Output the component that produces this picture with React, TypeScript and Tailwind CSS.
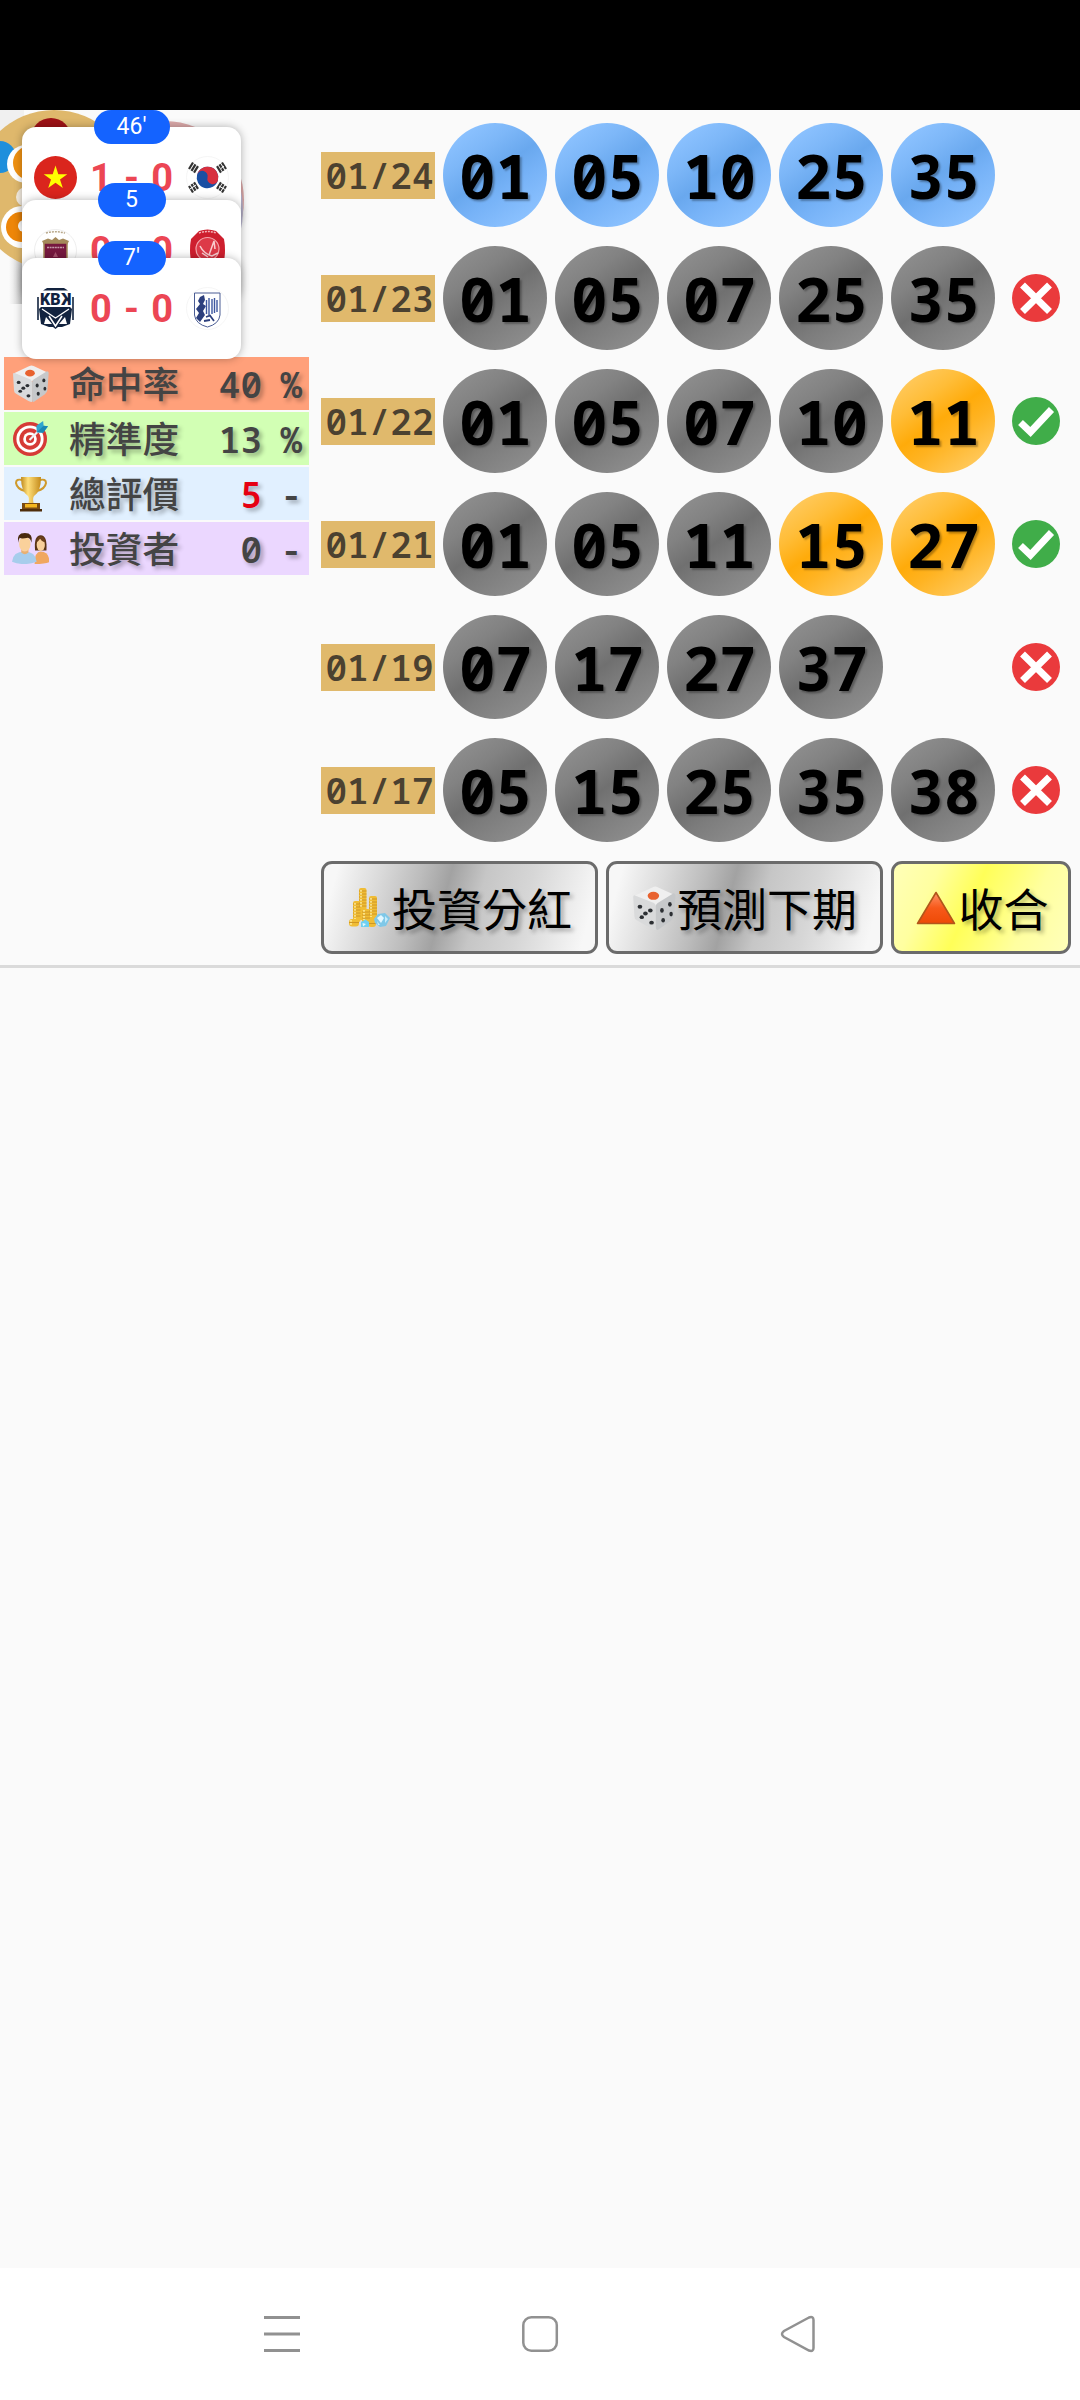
import type { ReactNode } from 'react';
import clsx from 'clsx';

type Tone = 'blue' | 'gray' | 'gold';

type Draw = {
  date: string;
  balls: [string, Tone][];
  hit?: boolean;
};

const draws: Draw[] = [
  { date: '01/24', balls: [['01', 'blue'], ['05', 'blue'], ['10', 'blue'], ['25', 'blue'], ['35', 'blue']] },
  { date: '01/23', balls: [['01', 'gray'], ['05', 'gray'], ['07', 'gray'], ['25', 'gray'], ['35', 'gray']], hit: false },
  { date: '01/22', balls: [['01', 'gray'], ['05', 'gray'], ['07', 'gray'], ['10', 'gray'], ['11', 'gold']], hit: true },
  { date: '01/21', balls: [['01', 'gray'], ['05', 'gray'], ['11', 'gray'], ['15', 'gold'], ['27', 'gold']], hit: true },
  { date: '01/19', balls: [['07', 'gray'], ['17', 'gray'], ['27', 'gray'], ['37', 'gray']], hit: false },
  { date: '01/17', balls: [['05', 'gray'], ['15', 'gray'], ['25', 'gray'], ['35', 'gray'], ['38', 'gray']], hit: false },
];

const toneClass: Record<Tone, string> = {
  blue: 'bg-[linear-gradient(145deg,#8cc2ff_12%,#7db7f8_30%,#69a8ee_48%,#76b2f7_62%,#8cc2ff_88%)]',
  gray: 'bg-[linear-gradient(145deg,#8d8d8d_12%,#828282_30%,#707070_48%,#7c7c7c_62%,#8d8d8d_88%)]',
  gold: 'bg-[linear-gradient(145deg,#ffc95c_12%,#ffbd38_30%,#ffab0a_48%,#ffb321_62%,#ffc95c_88%)]',
};

/* ---------- icons ---------- */

function DiceIcon({ className }: { className?: string }) {
  return (
    <svg viewBox="0 0 36 36" className={className}>
      <path d="M2 8 L17 1 Q19 0 21 1 L34 7 L19 16 Z" fill="#efefef" />
      <path d="M1 9 Q1 7 3 8 L18 14 Q19.5 15 19.5 17 L19.5 36 Q18 36 16 35 L4 28 Q2 27 2 25 Z" fill="#d9dadb" />
      <path d="M34 6 Q36 6 35.600 9 L34.500 24 Q34 27 32 28.500 L21 36 Q19.500 36 19.500 34 L19.500 17 Q19.500 15 21 14 Z" fill="#c6c8ca" />
      <ellipse cx="17.500" cy="8" rx="4.700" ry="3.300" fill="#e8622f" />
      <g fill="#2c2f33">
        <ellipse cx="6.500" cy="17" rx="1.900" ry="1.600" />
        <ellipse cx="15" cy="20" rx="1.900" ry="1.600" />
        <ellipse cx="11" cy="22.500" rx="1.900" ry="1.600" />
        <ellipse cx="8" cy="25.500" rx="1.800" ry="1.500" />
        <ellipse cx="16" cy="30" rx="1.900" ry="1.600" />
        <ellipse cx="31" cy="15" rx="1.500" ry="1.900" />
        <ellipse cx="24.500" cy="20" rx="1.500" ry="1.900" />
        <ellipse cx="32" cy="23" rx="1.400" ry="1.900" />
        <ellipse cx="25.500" cy="28" rx="1.500" ry="1.900" />
      </g>
    </svg>
  );
}

function TargetIcon({ className }: { className?: string }) {
  return (
    <svg viewBox="0 0 36 36" className={className}>
      <circle cx="17.500" cy="18.500" r="17.500" fill="#d63a36" />
      <circle cx="17.500" cy="18.500" r="14" fill="#fff" />
      <circle cx="17.500" cy="18.500" r="11" fill="#d63a36" />
      <circle cx="17.500" cy="18.500" r="7" fill="#fff" />
      <circle cx="17.500" cy="18.500" r="4.200" fill="#d63a36" />
      <path d="M17 19.500 L27 9.500" stroke="#eef3f5" strokeWidth="2.200" />
      <path d="M24 5 L31 0 L31.500 5 L36 5.500 L31 12 L24.500 11.500 Z" fill="#2fa5cf" />
      <path d="M24.500 11.500 L31.500 5 L36 5.500 L31 12 Z" fill="#1b87b4" />
    </svg>
  );
}

function TrophyIcon({ className }: { className?: string }) {
  return (
    <svg viewBox="0 0 36 36" className={className}>
      <defs>
        <linearGradient id="cup" x1="0" x2="1" y1="0" y2="0">
          <stop offset="0" stopColor="#c08a1c" />
          <stop offset=".35" stopColor="#ffdf7a" />
          <stop offset="1" stopColor="#c48a1a" />
        </linearGradient>
      </defs>
      <path d="M9 4 Q3 2.500 3 7 Q4 13 12 15" fill="none" stroke="#cf9a2c" strokeWidth="2" />
      <path d="M27 4 Q33 2.500 33 7 Q32 13 24 15" fill="none" stroke="#cf9a2c" strokeWidth="2" />
      <path d="M8 1 H28 Q28 16 21 20 Q19.500 22 20.500 27 H15.500 Q16.500 22 15 20 Q8 16 8 1 Z" fill="url(#cup)" />
      <path d="M9 27 H27 V33 H9 Z" fill="#7a4a12" />
      <path d="M12 28 H24 V31.500 H12 Z" fill="#f3b51f" />
      <path d="M7 33 H29 V35.500 H7 Z" fill="#4f2d0b" />
    </svg>
  );
}

function PeopleIcon({ className }: { className?: string }) {
  return (
    <svg viewBox="0 0 36 30" className={className}>
      <path d="M22.500 17 Q21 2 28 2 Q34.500 2 33.500 17 Z" fill="#5a3415" />
      <path d="M22 30 Q22 18 28 18 Q36 18 36.500 28 Q33 30 22 30 Z" fill="#f0a760" />
      <ellipse cx="28" cy="11.500" rx="4" ry="6" fill="#f8cf9a" />
      <path d="M23.500 9 Q25 3 28.500 3 Q32 4 32.500 9 Q28 8 27.500 5 Q26 8 23.500 9 Z" fill="#6b3f1b" />
      <path d="M0 28 Q1 18 12 18 Q23 18 24 28 Q18 30.500 12 30 Q5 30.500 0 28 Z" fill="#a7cdec" />
      <path d="M9 15 H16 V19 Q12.500 22 9 19 Z" fill="#e9b072" />
      <ellipse cx="12.500" cy="10.500" rx="5.600" ry="7.500" fill="#fad19b" />
      <path d="M6 9.500 Q4 0 12.500 0 Q21 0 19 9.500 Q18 5 15.500 4.500 Q9 6 7.500 4.500 Q6.500 6 6 9.500 Z" fill="#49290f" />
    </svg>
  );
}

function CoinsIcon({ className }: { className?: string }) {
  return (
    <svg viewBox="0 0 42 42" className={className}>
      <g fill="#f0bd35">
        <rect x="11" y="1" width="7.500" height="32" rx="2" />
        <rect x="5" y="14" width="7.500" height="21" rx="2" />
        <rect x="21" y="9" width="8" height="25" rx="2" />
        <rect x="1" y="32" width="10" height="7.500" rx="3" />
        <rect x="14" y="22" width="8" height="14" rx="2" />
        <rect x="20" y="33" width="8" height="7" rx="3" />
      </g>
      <path
        d="M11 4H18.500M11 7H18.500M11 10H18.500M11 13H18.500M11 16H18.500M11 19H18.500M5 17H12.500M5 20H12.500M5 23H12.500M5 26H12.500M5 29H12.500M21 12H29M21 15H29M21 18H29M21 21H29M21 24H29M21 27H29M14 25H22M14 28H22M14 31H22M1 35.500H11M20 36.500H28"
        stroke="#c78d22"
        strokeWidth=".8"
      />
      <path
        d="M13 3V20M7 16V32M23 11V30M16 23V33M3 33V38"
        stroke="#fff0a0"
        strokeWidth="1.500"
        strokeDasharray="1.800 1.200"
      />
      <path d="M13 35 L17.500 32.500 L21 35 V40 H13 Z" fill="#6fd0f2" />
      <path d="M14.500 36 L18 37 L15 39.500 Z" fill="#e4f8ff" />
      <path d="M26 32 L30 27 L37 26 L42 31 L38 39 L32 40 L27 36 Z" fill="#7fc8e8" />
      <path d="M29 31 L33 28 L36 31 L33 36 Z" fill="#e3f7ff" />
      <path d="M37 29 L40 32 L37 36 Z M29 34 L32 38 L30 38 Z" fill="#c6ecfb" />
    </svg>
  );
}

function TriangleIcon({ className }: { className?: string }) {
  return (
    <svg viewBox="0 0 40 34" className={className}>
      <defs>
        <linearGradient id="tri" x1="0" x2="0" y1="0" y2="1">
          <stop offset="0" stopColor="#ff9468" />
          <stop offset=".5" stopColor="#f7591a" />
          <stop offset="1" stopColor="#ee4a06" />
        </linearGradient>
      </defs>
      <path d="M20 1.500 L38.500 32.500 H1.500 Z" fill="url(#tri)" stroke="#b1561a" strokeWidth="1.600" strokeLinejoin="round" />
    </svg>
  );
}

function ResultIcon({ hit }: { hit: boolean }) {
  return (
    <svg viewBox="0 0 48 48" className="size-12">
      <circle cx="24" cy="24" r="24" fill={hit ? '#40ad49' : '#ea3a3c'} />
      {hit ? (
        <path d="M8.500 25.500 L18.500 35 L39.500 12.500" fill="none" stroke="#fff" strokeWidth="7" />
      ) : (
        <path d="M10.500 11 L37.500 37.500 M37.500 11 L10.500 37.500" stroke="#fff" strokeWidth="7" />
      )}
    </svg>
  );
}

/* ---------- club badges ---------- */

function VietnamFlag() {
  return (
    <svg viewBox="0 0 43 43" className="size-[43px]">
      <circle cx="21.500" cy="21.500" r="21.500" fill="#da251d" />
      <path d="M21.500 9.500 L24.300 18.200 H33.300 L26 23.500 L28.800 32 L21.500 26.800 L14.200 32 L17 23.500 L9.700 18.200 H18.700 Z" fill="#ff0" />
    </svg>
  );
}

function KoreaFlag() {
  return (
    <svg viewBox="0 0 43 43" className="size-[43px]">
      <circle cx="21.500" cy="21.500" r="21" fill="#fff" stroke="#f1f1f1" strokeWidth=".7" />
      <g transform="rotate(15 21.500 21.500)">
        <circle cx="21.500" cy="21.500" r="10.800" fill="#1a4fa3" />
        <path d="M10.700 21.500 A10.800 10.800 0 0 1 32.300 21.500 A5.400 5.400 0 0 1 21.500 21.500 A5.400 5.400 0 0 0 10.700 21.500 Z" fill="#d8303f" />
      </g>
      <g stroke="#333" strokeWidth="2.200">
        <path d="M3 13 L7 6.500 M5.500 14.800 L9.500 8.300 M8 16.600 L12 10.100" />
        <path d="M40 13 L36 6.500 M37.500 14.800 L33.500 8.300 M35 16.600 L31 10.100" />
        <path d="M3 30 L7 36.500 M5.500 28.200 L9.500 34.700 M8 26.400 L12 32.900" />
        <path d="M40 30 L36 36.500 M37.500 28.200 L33.500 34.700 M35 26.400 L31 32.900" />
      </g>
      <path d="M35 12.500 L38 10 M4 33 L10 29 M33 30 L39 33.500" stroke="#fff" strokeWidth="1" />
    </svg>
  );
}

function MaroonCrest() {
  return (
    <svg viewBox="0 0 43 43" className="size-[43px]">
      <circle cx="21.500" cy="21.500" r="21" fill="#fff" stroke="#e6e6e6" strokeWidth=".7" />
      <path d="M12 4 Q21 1.500 31 4" fill="none" stroke="#b9a98c" strokeWidth="1.500" strokeDasharray="2 1" />
      <path d="M8 12 L14 9.500 L18 11 L21.500 8 L25 11 L29 9.500 L35 12 L33 16 H10 Z" fill="#a58a5b" />
      <path d="M10 14 H33 V30 Q30 36 21.500 39 Q13 36 10 30 Z" fill="#76183f" stroke="#a58a5b" strokeWidth="1.500" />
      <path d="M13 18.500 H30" stroke="#c49aa8" strokeWidth="1.500" strokeDasharray="2 .6" />
      <path d="M21.500 23 L24 28 H19 Z" fill="#a8526f" />
    </svg>
  );
}

function RedCrest() {
  return (
    <svg viewBox="0 0 43 43" className="size-[43px]">
      <path d="M13 2 Q21.500 -1 30 2 L38 10 Q40 21 38 32 L30 41 H13 L5 32 Q3 21 5 10 Z" fill="#ce1f2e" />
      <circle cx="21.500" cy="20" r="11.500" fill="#dd3a48" stroke="#f3a5ab" strokeWidth="1.200" />
      <path d="M14 17 Q18 25 26 27 L32 24 M23 26 L28 12 L29 20 M16 24 L22 28" fill="none" stroke="#f9cdd0" strokeWidth="1.500" />
      <path d="M13 4 Q21.500 1 30 4" fill="none" stroke="#f5b6b9" strokeWidth="1.500" strokeDasharray="2 1" />
    </svg>
  );
}

function KbkCrest() {
  return (
    <svg viewBox="0 0 37 41" className="h-[41px] w-[37px]">
      <path d="M10 0 H27 L31 2.500 H6 Z" fill="#12233f" />
      <path d="M4 19 H33 L35 21 L33 36 L25 39 H21 L18.500 41 L16 39 H12 L4 36 L2 21 Z" fill="#12233f" />
      <path d="M1 9 V32 M36 9 V32" stroke="#12233f" strokeWidth="1.600" />
      <text x="3" y="16.500" className="fill-[#12233f] font-['Roboto'] text-[16px] font-black">
        KB
      </text>
      {/* last letter of the club name is mirrored */}
      <text x="-34.500" y="16.500" transform="scale(-1 1)" className="fill-[#12233f] font-['Roboto'] text-[16px] font-black">
        K
      </text>
      <path d="M5 21 L18.500 30 L32 21" fill="none" stroke="#fff" strokeWidth="1.300" />
      <path d="M7 36 L9 29 L15 36 Z M30 36 L28 29 L22 36 Z" fill="#fff" />
      <path d="M12 28 L18.500 38 L25 28" fill="none" stroke="#fff" strokeWidth="1.500" />
    </svg>
  );
}

function BlueCrest() {
  return (
    <svg viewBox="0 0 43 43" className="size-[43px]">
      <circle cx="21.500" cy="21.500" r="21" fill="#fff" stroke="#f1f1f1" strokeWidth=".7" />
      <path d="M8.500 6 H34 V28 Q33 37 21.500 40 Q9.500 37 8.500 28 Z" fill="#fff" stroke="#4a5c94" strokeWidth="1" />
      <path d="M14 10 L18 8 L19 13 L17 17 L20 19 L17 24 L19 28 L14 35 L10 31 L13 26 L10 22 L14 17 L12 14 Z" fill="#2c3f7d" />
      <path d="M20.500 13 V27 M23 11 V28 M26 12 V27 M28.500 11 V26 M31 13 V25" stroke="#3d57a0" strokeWidth="1.400" />
      <path d="M20 30 L24 28.500 L28 34 M18 34 L24 33" fill="none" stroke="#2c3f7d" strokeWidth="1.800" />
    </svg>
  );
}

/* ---------- floating live scores ---------- */

type MatchProps = {
  minute: string;
  score: string;
  home: ReactNode;
  away: ReactNode;
  position: string;
  pill?: string;
};

function MatchCard({ minute, score, home, away, position, pill = 'w-[68px]' }: MatchProps) {
  const [left, right] = score.split('-');
  return (
    <div className={clsx('absolute left-[22px] h-[101px] w-[219px] rounded-[14px] bg-white shadow-[0_0_9px_rgba(0,0,0,0.3)]', position)}>
      <span
        className={clsx(
          'absolute -top-[17px] left-1/2 flex h-[34px] -translate-x-1/2 items-center justify-center rounded-full bg-[#1463ff] text-[23px] text-white',
          pill,
        )}
      >
        {minute}
      </span>
      <div className="flex h-full items-center pr-3 pl-3">
        <div className="flex w-[43px] justify-center">{home}</div>
        <div className="flex flex-1 items-center justify-between pr-[13px] pl-[13px] text-[38px] leading-none font-bold text-[#ec4654]">
          <span>{left}</span>
          <span>-</span>
          <span>{right}</span>
        </div>
        <div className="flex w-[43px] justify-center">{away}</div>
      </div>
    </div>
  );
}

function LiveScores() {
  return (
    <div className="absolute inset-x-0 top-0 h-[260px] font-['Roboto',sans-serif]">
      {/* lottery emblem behind the cards */}
      <svg viewBox="0 0 250 205" className="absolute top-0 left-0 h-[205px] w-[250px]">
        <defs>
          <linearGradient id="edge" x1="0" x2="1" y1="0" y2="0">
            <stop offset="0" stopColor="#d0d0d0" stopOpacity="0" />
            <stop offset="1" stopColor="#bdbdbd" />
          </linearGradient>
        </defs>
        <rect width="24" height="60" fill="#f0f0f0" />
        <rect x="9" y="120" width="15" height="74" fill="url(#edge)" />
        <circle cx="54" cy="80" r="80" fill="#dfb86c" />
        <circle cx="165" cy="90" r="79" fill="#dba9a9" />
        <path d="M240 76 Q246 100 240 124 Z" fill="#c3c0dc" />
        <circle cx="51" cy="28" r="20" fill="#9e1216" />
        <circle cx="0" cy="47" r="16" fill="#1e8fdc" />
        <circle cx="26" cy="54" r="19" fill="#fff" />
        <circle cx="30" cy="53" r="17" fill="#ef9112" />
        <circle cx="26" cy="87" r="10" fill="#f4ece0" />
        <circle cx="22" cy="117" r="21" fill="#fff" />
        <circle cx="21" cy="117" r="15" fill="#ee8608" />
        <circle cx="24" cy="116" r="6" fill="#fff" />
      </svg>
      <MatchCard minute="46'" score="1-0" position="top-[17px]" pill="w-[76px]" home={<VietnamFlag />} away={<KoreaFlag />} />
      <MatchCard minute="5" score="0-0" position="top-[90px]" home={<MaroonCrest />} away={<RedCrest />} />
      <MatchCard minute="7'" score="0-0" position="top-[148px]" home={<KbkCrest />} away={<BlueCrest />} />
    </div>
  );
}

/* ---------- left column ---------- */

type StatRowProps = {
  icon: ReactNode;
  label: string;
  value: string;
  unit: string;
  color: string;
  valueClass?: string;
};

function StatRow({ icon, label, value, unit, color, valueClass }: StatRowProps) {
  return (
    <div className={clsx('flex h-[53px] items-center pr-[7px] pl-2', color)}>
      <div className="flex w-[37px] justify-center">{icon}</div>
      <span className="mt-px ml-5 text-[36.7px] leading-none font-medium">{label}</span>
      <span className={clsx('mt-[2px] flex-1 text-right', valueClass)}>{value}</span>
      <span className="mt-[2px] w-[40px] text-right">{unit}</span>
    </div>
  );
}

function StatsTable() {
  return (
    <div className="flex w-[305px] flex-col gap-[2px] font-['Noto_Sans_Mono','Noto_Sans_CJK_TC',monospace] text-[36px] leading-none font-semibold text-[#444] [text-shadow:3px_3px_4px_rgba(0,0,0,0.3)]">
      <StatRow icon={<DiceIcon className="size-[37px]" />} label="命中率" value="40" unit="%" color="bg-[#ffa07a]" />
      <StatRow icon={<TargetIcon className="size-[35px]" />} label="精準度" value="13" unit="%" color="bg-[#d2ffb4]" />
      <StatRow icon={<TrophyIcon className="size-[36px]" />} label="總評價" value="5" unit="-" color="bg-[#e1f0ff]" valueClass="text-[#e60012]" />
      <StatRow icon={<PeopleIcon className="h-[31px] w-[37px]" />} label="投資者" value="0" unit="-" color="bg-[#ebd7ff]" />
    </div>
  );
}

/* ---------- right column ---------- */

function DrawRow({ date, balls, hit }: Draw) {
  return (
    <div className="flex h-[123px] items-center">
      <span className="mt-px flex h-[47px] w-[114px] items-center justify-center bg-[#e0b96c] pt-[2px] pl-[3px] text-[36px] leading-none font-semibold text-[#4b4130]">
        {date}
      </span>
      <div className="ml-2 flex w-[553px] gap-2">
        {balls.map(([num, tone]) => (
          <span
            key={num}
            className={clsx(
              'flex size-[104px] items-center justify-center rounded-full pt-px pl-px text-[61px] leading-none font-bold text-black [text-shadow:2px_2px_2px_rgba(0,0,0,0.3)]',
              toneClass[tone],
            )}
          >
            {num}
          </span>
        ))}
      </div>
      {hit !== undefined && (
        <div className="ml-4">
          <ResultIcon hit={hit} />
        </div>
      )}
    </div>
  );
}

function ActionButton({ icon, label, className }: { icon: ReactNode; label: string; className: string }) {
  return (
    <button
      className={clsx(
        "flex h-[93px] items-center justify-center rounded-[11px] border-3 border-[#6b6b6b] font-['Noto_Sans_CJK_TC',sans-serif] text-[45px] leading-none text-black [text-shadow:3px_3px_4px_rgba(0,0,0,0.3)]",
        className,
      )}
    >
      <span className="flex w-[45px] justify-center">{icon}</span>
      {label}
    </button>
  );
}

function NavBar() {
  return (
    <nav className="flex h-[132px] items-center bg-white">
      <svg viewBox="0 0 1080 132" className="h-[132px] w-[1080px]" fill="none" stroke="#919191" strokeWidth="2.500">
        <path d="M264 49.500 H300 M264 66 H300 M264 82.500 H300" strokeWidth="3" />
        <rect x="523.300" y="49.300" width="33.500" height="33.500" rx="8" />
        <path d="M809 49.500 L784 63 Q780 66 784 69 L809 82.500 Q813.500 84 813.500 80 V52 Q813.500 48 809 49.500 Z" />
      </svg>
    </nav>
  );
}

export default function App() {
  const silver = 'bg-[linear-gradient(105deg,#f7f7f7_5%,#dadada_20%,#bcbcbc_34%,#a2a2a2_44%,#c6c6c6_56%,#d6d6d6_72%,#f7f7f7_95%)]';

  return (
    <div className="flex h-[2400px] w-[1080px] flex-col bg-[#fafafa]">
      <div className="h-[110px] bg-black" />

      <main className="flex h-[858px] border-b-3 border-[#dadada]">
        <section className="relative w-[321px] pt-[247px] pl-1">
          <StatsTable />
          <LiveScores />
        </section>

        <section className="flex w-[759px] flex-col pt-[3px] font-['Noto_Sans_Mono','Noto_Sans_CJK_TC',monospace]">
          {draws.map((d) => (
            <DrawRow key={d.date} {...d} />
          ))}
          <div className="mt-[10px] flex gap-2">
            <ActionButton icon={<CoinsIcon className="size-[42px]" />} label="投資分紅" className={clsx('w-[277px]', silver)} />
            <ActionButton icon={<DiceIcon className="size-[44px]" />} label="預測下期" className={clsx('w-[277px]', silver)} />
            <ActionButton
              icon={<TriangleIcon className="h-[34px] w-[40px]" />}
              label="收合"
              className="w-[180px] bg-[linear-gradient(115deg,#ffffb4_4%,#ffffa0_22%,#ffff58_44%,#ffff78_58%,#ffffa0_74%,#ffffb8_98%)]"
            />
          </div>
        </section>
      </main>

      <div className="flex-1" />
      <NavBar />
    </div>
  );
}
